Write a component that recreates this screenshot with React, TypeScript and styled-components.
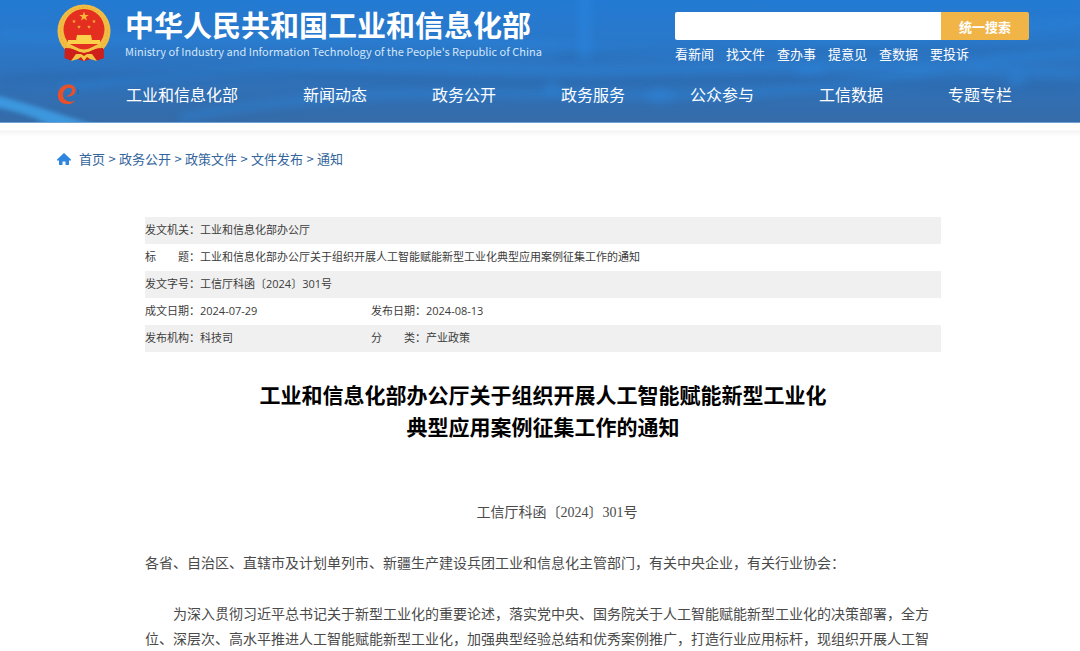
import React from "react";
import styled, { createGlobalStyle } from "styled-components";

const sans = `"Open Sans", "Noto Sans CJK SC", sans-serif`;
const cjk = `"Noto Sans CJK SC", sans-serif`;
const serif = `"Liberation Serif", "Noto Sans CJK SC", serif`;

const GlobalStyle = createGlobalStyle`
  * { box-sizing: border-box; }
  body { margin: 0; background: #fff; color: #333; font-family: ${cjk}; }
  a { color: inherit; text-decoration: none; }
`;

const Header = styled.header`
  position: relative;
  overflow: hidden;
  padding: 0 51px 0 57px;
  color: #fff;
  background: linear-gradient(180deg, #237ad2 0%, #2a78ca 35%, #2f71b9 65%, #356ba8 100%);
`;

const Backdrop = styled.svg`
  position: absolute;
  inset: 0;
  width: 100%;
  height: 100%;
`;

const Top = styled.div`
  position: relative;
  display: flex;
  justify-content: space-between;
  height: 66px;
`;

const Brand = styled.a`
  display: flex;
  gap: 14px;
  padding-top: 4px;
`;

const BrandText = styled.div`
  display: flex;
  flex-direction: column;
  padding-top: 1px;
`;

const BrandName = styled.span`
  font-size: 29px;
  line-height: 38px;
  font-weight: 700;
  white-space: nowrap;
`;

const BrandEnglish = styled.span`
  font-size: 11px;
  line-height: 16px;
  white-space: nowrap;
  color: #d3e7fa;
`;

const Search = styled.form`
  width: 354px;
  padding-top: 12px;
`;

const SearchBar = styled.div`
  display: flex;
  height: 28px;
  border-radius: 2px;
  overflow: hidden;
`;

const SearchInput = styled.input`
  flex: 1;
  min-width: 0;
  border: 0;
  padding: 0 8px;
  background: #fff;
  font: 13px ${cjk};
`;

const SearchButton = styled.button`
  width: 88px;
  border: 0;
  padding: 0;
  color: #fff;
  background: #f0b447;
  font: 700 13px ${cjk};
`;

const QuickLinks = styled.nav`
  display: flex;
  gap: 12px;
  padding-top: 4px;
  font-size: 13px;
  line-height: 20px;
`;

const MainNav = styled.nav`
  position: relative;
  display: flex;
  align-items: center;
  height: 57px;
`;

const NavLinks = styled.div`
  flex: 1;
  display: flex;
  justify-content: space-between;
  padding: 0 17px 2px 46px;
  font-size: 16px;
  line-height: 24px;
`;

const Divider = styled.div`
  height: 14px;
  background: linear-gradient(180deg, #fff 7px, #f4f4f4 8px, #fff 14px);
`;

const Breadcrumb = styled.nav`
  display: flex;
  align-items: center;
  padding: 12px 57px 0;
  font-size: 13px;
  line-height: 20px;
  color: #33659c;
`;

const HomeIcon = styled.svg`
  width: 14px;
  height: 14px;
  margin-right: 8px;
`;

const Separator = styled.span`
  width: 14px;
  text-align: center;
`;

const Article = styled.main`
  margin: 48px 139px 0 145px;
`;

const Meta = styled.table`
  width: 100%;
  border-collapse: collapse;
  table-layout: fixed;
  font-family: ${sans};
  font-size: 11px;
  line-height: 16px;
  color: #3c3c3c;
`;

const MetaRow = styled.tr<{ $shaded?: boolean }>`
  height: 27px;
  background: ${(p) => (p.$shaded ? "#f0f0f0" : "#fff")};
`;

const MetaLabel = styled.th`
  padding: 0 0 1px;
  text-align: left;
  font-weight: 400;
  white-space: nowrap;
`;

const MetaValue = styled.td`
  padding: 0 0 1px;
`;

const LabelCol = styled.col`
  width: 55px;
`;

const ValueCol = styled.col`
  width: 171px;
`;

const Title = styled.h1`
  margin: 26px 0 0;
  text-align: center;
  font-size: 21px;
  line-height: 32px;
  font-weight: 700;
  color: #000;
`;

const Body = styled.div`
  font-family: ${serif};
  font-size: 14px;
  line-height: 25px;
  color: #4a4a4a;
`;

const DocNumber = styled.p`
  margin: 58px 0 0;
  text-align: center;
  text-indent: 2em;
`;

const Paragraph = styled.p<{ $indent?: boolean }>`
  margin: 26px 0 0;
  text-indent: ${(p) => (p.$indent ? "2em" : "0")};
`;

const navItems = ["工业和信息化部", "新闻动态", "政务公开", "政务服务", "公众参与", "工信数据", "专题专栏"];
const quickItems = ["看新闻", "找文件", "查办事", "提意见", "查数据", "要投诉"];
const crumbs = ["首页", "政务公开", "政策文件", "文件发布", "通知"];

const Waves = () => (
  <Backdrop viewBox="0 0 1080 123" preserveAspectRatio="none" aria-hidden="true">
    <defs>
      <filter id="soft" x="-50%" y="-80%" width="200%" height="260%">
        <feGaussianBlur stdDeviation="4" />
      </filter>
      <filter id="fine" x="-20%" y="-80%" width="140%" height="260%">
        <feGaussianBlur stdDeviation="2" />
      </filter>
    </defs>
    <g fill="none" stroke="#2a86dc" strokeWidth="7" opacity="0.5" filter="url(#soft)">
      <path d="M60 88C250 62 340 64 520 70S820 56 1080 74" />
      <path d="M180 118C400 74 600 104 760 92S960 60 1080 50" />
      <path d="M0 34C160 46 380 30 560 46S900 30 1080 22" />
    </g>
    <g fill="none" stroke="#285f9f" strokeWidth="5" opacity="0.4" filter="url(#soft)">
      <path d="M90 78C300 60 420 92 620 82S900 92 1080 86" />
      <path d="M560 56C760 40 900 60 1080 44" />
      <path d="M0 82C60 70 90 82 160 74" />
    </g>
    <path d="M-10 94C24 102 60 114 110 130L60 132C40 118 20 112 -10 106Z" fill="#3fa6ee" opacity="0.75" filter="url(#fine)" />
    <g fill="#2f8fec" opacity="0.3" filter="url(#soft)">
      <rect x="579" y="-20" width="12" height="80" />
      <ellipse cx="552" cy="88" rx="9" ry="7" />
      <ellipse cx="660" cy="96" rx="14" ry="7" />
      <ellipse cx="1017" cy="80" rx="9" ry="7" />
      <ellipse cx="810" cy="70" rx="16" ry="5" />
    </g>
    <path d="M0 122.5H1080" stroke="#6fa3d6" strokeWidth="1" />
  </Backdrop>
);

const star = "M0 -5L1.2 -1.6L4.8 -1.6L1.9 .6L3 4L0 2L-3 4L-1.9 .6L-4.8 -1.6L-1.2 -1.6Z";

const Emblem = () => (
  <svg width="54" height="58" viewBox="0 0 54 58" role="img" aria-label="国徽">
    <path d="M8 38L7.5 54L14 56.5L20 55L27 57L34 55L40 56.5L47 54L46.5 38Z" fill="#cf1f1b" />
    <circle cx="27" cy="27" r="26.5" fill="#f0bd42" />
    <circle cx="27" cy="27" r="23.5" fill="none" stroke="#e0a233" strokeWidth="1" strokeDasharray="2 2" opacity="0.6" />
    <circle cx="27" cy="25.5" r="20.5" fill="#e42e20" />
    <g fill="#f6b83c">
      <path d={star} transform="translate(27 12.5)" />
      <path d={star} transform="translate(17 17.5) scale(.4)" />
      <path d={star} transform="translate(22 23) scale(.4)" />
      <path d={star} transform="translate(32 23) scale(.4)" />
      <path d={star} transform="translate(37 17.5) scale(.4)" />
    </g>
    <path d="M20 31H34L35 36H43V40H11V36H19Z" fill="#fbd04a" />
    <path d="M8 44C15 44 20 46 27 49C34 46 39 44 46 44L46 54L40 56L34 54L27 57L20 54L14 56L8 54Z" fill="#cf1f1b" />
    <path d="M10 41C17 42 18 47 27 47S37 42 44 41" fill="none" stroke="#f6c444" strokeWidth="3" />
    <path d="M14 57L19 50H24L27 52L30 50H35L40 57L33 55L30 53L27 57L24 53L21 55Z" fill="#f6c444" />
  </svg>
);

const NavLogo = () => (
  <svg width="23" height="22" viewBox="0 0 23 22" aria-hidden="true">
    <path
      d="M18 17C13 22 4 21 1.5 15C-1 8 4 1 11 .5C16 .3 19 3 18.500 7C18 11 14 13 9 12.500C13 11 15 9 15 6C15 3.500 12 3 9.500 4.500C6 6.500 5 11 7 14.500C9 17.500 13 18.500 18 17Z"
      fill="#e8502a"
    />
    <path d="M20.500 4.500C22.500 6.500 22.500 9 20 10.500C21 8.500 21 6.500 20.500 4.500Z" fill="#1c5d9e" />
  </svg>
);

export default function App() {
  return (
    <>
      <GlobalStyle />
      <Header>
        <Waves />
        <Top>
          <Brand href="#">
            <Emblem />
            <BrandText>
              <BrandName>中华人民共和国工业和信息化部</BrandName>
              <BrandEnglish>Ministry of Industry and Information Technology of the People's Republic of China</BrandEnglish>
            </BrandText>
          </Brand>
          <Search onSubmit={(e) => e.preventDefault()}>
            <SearchBar>
              <SearchInput type="text" aria-label="统一搜索" />
              <SearchButton type="submit">统一搜索</SearchButton>
            </SearchBar>
            <QuickLinks>
              {quickItems.map((t) => <a href="#" key={t}>{t}</a>)}
            </QuickLinks>
          </Search>
        </Top>
        <MainNav>
          <NavLogo />
          <NavLinks>
            {navItems.map((t) => <a href="#" key={t}>{t}</a>)}
          </NavLinks>
        </MainNav>
      </Header>
      <Divider />
      <Breadcrumb>
        <HomeIcon viewBox="0 0 14 14" aria-hidden="true">
          <path d="M7 1L0 7.500V8.500H2V13H5.500V9.500H8.500V13H12V8.500H14V7.500Z" fill="#2f86e0" />
        </HomeIcon>
        {crumbs.map((t, i) => (
          <React.Fragment key={t}>
            {i > 0 && <Separator>&gt;</Separator>}
            <a href="#">{t}</a>
          </React.Fragment>
        ))}
      </Breadcrumb>
      <Article>
        <Meta>
          <colgroup><LabelCol /><ValueCol /><LabelCol /><col /></colgroup>
          <tbody>
            <MetaRow $shaded><MetaLabel scope="row">发文机关：</MetaLabel><MetaValue colSpan={3}>工业和信息化部办公厅</MetaValue></MetaRow>
            <MetaRow><MetaLabel scope="row">标　　题：</MetaLabel><MetaValue colSpan={3}>工业和信息化部办公厅关于组织开展人工智能赋能新型工业化典型应用案例征集工作的通知</MetaValue></MetaRow>
            <MetaRow $shaded><MetaLabel scope="row">发文字号：</MetaLabel><MetaValue colSpan={3}>工信厅科函〔2024〕301号</MetaValue></MetaRow>
            <MetaRow><MetaLabel scope="row">成文日期：</MetaLabel><MetaValue>2024-07-29</MetaValue><MetaLabel scope="row">发布日期：</MetaLabel><MetaValue>2024-08-13</MetaValue></MetaRow>
            <MetaRow $shaded><MetaLabel scope="row">发布机构：</MetaLabel><MetaValue>科技司</MetaValue><MetaLabel scope="row">分　　类：</MetaLabel><MetaValue>产业政策</MetaValue></MetaRow>
          </tbody>
        </Meta>
        <Title>工业和信息化部办公厅关于组织开展人工智能赋能新型工业化<br />典型应用案例征集工作的通知</Title>
        <Body>
          <DocNumber>工信厅科函〔2024〕301号</DocNumber>
          <Paragraph>各省、自治区、直辖市及计划单列市、新疆生产建设兵团工业和信息化主管部门，有关中央企业，有关行业协会：</Paragraph>
          <Paragraph $indent>为深入贯彻习近平总书记关于新型工业化的重要论述，落实党中央、国务院关于人工智能赋能新型工业化的决策部署，全方位、深层次、高水平推进人工智能赋能新型工业化，加强典型经验总结和优秀案例推广，打造行业应用标杆，现组织开展人工智</Paragraph>
        </Body>
      </Article>
    </>
  );
}
